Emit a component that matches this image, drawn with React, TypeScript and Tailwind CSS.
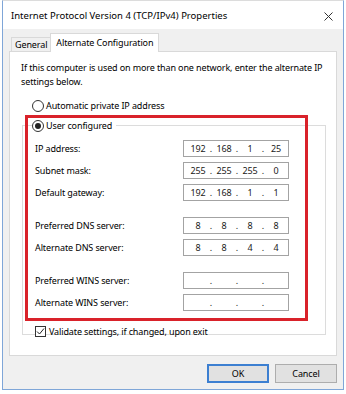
import { Fragment } from "react";

const font = "font-['Noto_Sans','Liberation_Sans',sans-serif]";

function IpField({ parts }: { parts: string[] }) {
  return (
    <div className="w-[106px] h-[17px] border border-[#a3a3a3] bg-white flex items-center pl-[3px] text-[9px] text-[#1a1a1a]">
      {parts.map((p, i) => (
        <Fragment key={i}>
          {i > 0 && <span className="w-[4px] text-center">.</span>}
          <span className="w-[22px] text-center">{p}</span>
        </Fragment>
      ))}
    </div>
  );
}

function Row({ label, parts, className = "" }: { label: string; parts: string[]; className?: string }) {
  return (
    <div className={`flex items-center h-[17px] ${className}`}>
      <span className="w-[148px]">{label}</span>
      <IpField parts={parts} />
    </div>
  );
}

function Radio({ checked }: { checked?: boolean }) {
  return (
    <span className="w-[12px] h-[12px] rounded-full border border-[#333] bg-white flex items-center justify-center shrink-0">
      {checked && <span className="w-[6px] h-[6px] rounded-full bg-[#222]" />}
    </span>
  );
}

export default function App() {
  return (
    <div className={`w-[346px] h-[394px] bg-white relative text-[9px] tracking-[-0.12px] text-black ${font}`}>
      {/* window */}
      <div className="ml-[2px] w-[342px] h-[390px] border border-[#7fa6d8] border-t-[#dcdcdc] bg-[#f0f0f0] flex flex-col">
        {/* title bar */}
        <div className="h-[28px] bg-white flex items-center justify-between pl-[8px] pr-[10px]">
          <span className="text-[9.5px] pt-[2px] tracking-normal">Internet Protocol Version 4 (TCP/IPv4) Properties</span>
          <svg width="9" height="9" viewBox="0 0 9 9" className="mt-[2px]">
            <path d="M0.5 0.5 L8.5 8.5 M8.5 0.5 L0.5 8.5" stroke="#333" strokeWidth="1" />
          </svg>
        </div>

        {/* body */}
        <div className="flex-1 flex flex-col px-[6px] pt-[4px]">
          {/* tabs */}
          <div className="flex items-end h-[18px] pl-[2px]">
            <div className="h-[14px] px-[3px] border border-b-0 border-r-0 border-[#d9d9d9] bg-[#f0f0f0] flex items-center">
              General
            </div>
            <div className="relative z-10 h-[19px] -mb-[1px] px-[5px] border border-b-0 border-[#d9d9d9] bg-white flex items-center pb-[1px]">
              Alternate Configuration
            </div>
          </div>

          {/* panel */}
          <div className="w-[328px] h-[305px] border border-[#d9d9d9] bg-white pt-[9px] pl-[11px]">
            <p className="leading-[14px] w-[312px]">
              If this computer is used on more than one network, enter the alternate IP settings below.
            </p>
            <div className="flex items-center gap-[2px] mt-[10px] ml-[11px] h-[14px]">
              <Radio />
              <span>Automatic private IP address</span>
            </div>

            <fieldset className="w-[304px] h-[217px] ml-[1px] mt-[5px] border border-[#dcdcdc] pl-[12px] pt-[7px]">
              <legend className="flex items-center gap-[2px] ml-[-3px] pr-[4px] h-[15px]">
                <Radio checked />
                <span>User configured</span>
              </legend>
              <Row label="IP address:" parts={["192", "168", "1", "25"]} />
              <Row label="Subnet mask:" parts={["255", "255", "255", "0"]} className="mt-[5px]" />
              <Row label="Default gateway:" parts={["192", "168", "1", "1"]} className="mt-[5px]" />
              <Row label="Preferred DNS server:" parts={["8", "8", "8", "8"]} className="mt-[16px]" />
              <Row label="Alternate DNS server:" parts={["8", "8", "4", "4"]} className="mt-[5px]" />
              <Row label="Preferred WINS server:" parts={["", "", "", ""]} className="mt-[16px]" />
              <Row label="Alternate WINS server:" parts={["", "", "", ""]} className="mt-[5px]" />
              <div className="flex items-center gap-[3px] mt-[14px]">
                <span className="w-[11px] h-[11px] border border-[#333] bg-white flex items-center justify-center">
                  <svg width="9" height="9" viewBox="0 0 9 9">
                    <path d="M1 4.5 L3.5 7 L8 1.5" stroke="#222" strokeWidth="1" fill="none" />
                  </svg>
                </span>
                <span>Validate settings, if changed, upon exit</span>
              </div>
            </fieldset>
          </div>

          {/* buttons */}
          <div className="flex justify-end gap-[6px] mt-[8px] w-[328px]">
            <button className="w-[62px] h-[19px] border-2 border-[#3c7fd1] bg-[#e1e1e1] flex items-center justify-center">
              OK
            </button>
            <button className="w-[62px] h-[19px] border border-[#adadad] bg-[#e1e1e1] flex items-center justify-center">
              Cancel
            </button>
          </div>
        </div>
      </div>

      {/* red annotation */}
      <div className="absolute left-[25px] top-[115px] w-[283px] h-[206px] border-[3px] border-[#d9222a] pointer-events-none" />
    </div>
  );
}
